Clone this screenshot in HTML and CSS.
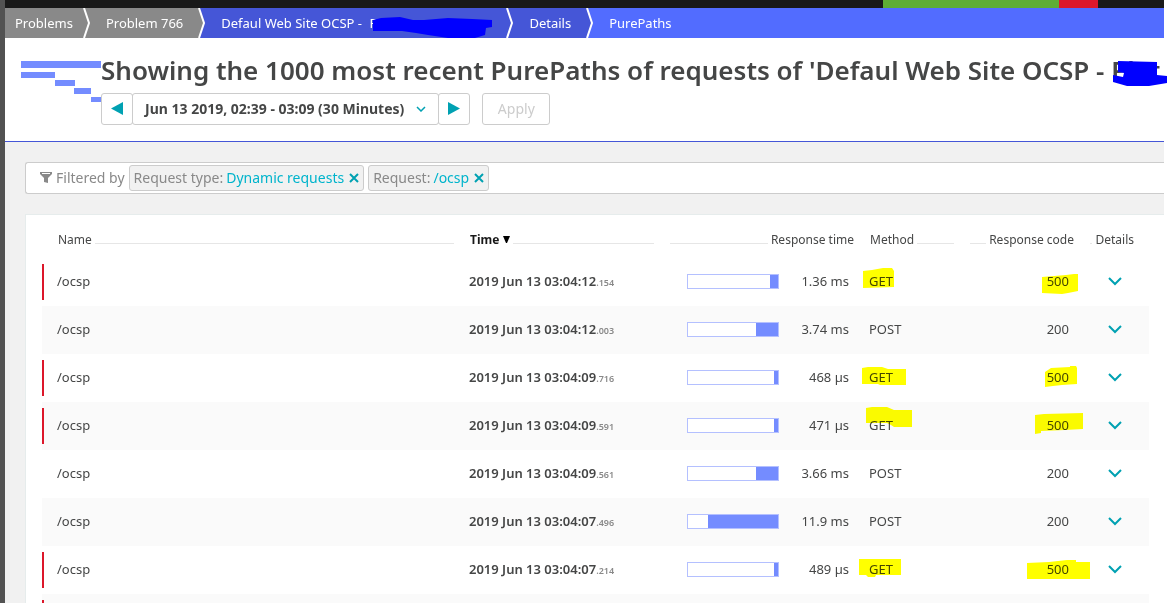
FILE: index.html
```html
<!DOCTYPE html>
<html lang="en">
<head>
<meta charset="UTF-8">
<meta name="viewport" content="width=device-width, initial-scale=1.0">
<title>PurePaths</title>
<link rel="stylesheet" href="styles.css">
</head>
<body>
<div class="page">
  <div class="topbar">
    <div class="status-ok"></div>
    <div class="status-problem"></div>
  </div>

  <nav class="crumbs">
    <a href="#" class="crumb grey">Problems</a>
    <svg class="sep grey" viewBox="0 0 8 30"><path d="M1 0L6 15L1 30"/></svg>
    <a href="#" class="crumb grey">Problem 766</a>
    <svg class="sep grey-blue" viewBox="0 0 8 30"><path class="tip" d="M0 0H1L6 15L1 30H0Z"/><path d="M1 0L6 15L1 30"/></svg>
    <a href="#" class="crumb blue">Defaul Web Site OCSP - <span class="redacted">P
      <svg class="scribble" viewBox="0 0 120 22"><path d="M1 4L9 2L28 1L41 4L52 4L76 2L100 3L120 4V11L114 12L113 19L103 22H76L56 19L44 17L30 15L1 15Z"/></svg></span></a>
    <svg class="sep blue" viewBox="0 0 8 30"><path d="M1 0L6 15L1 30"/></svg>
    <a href="#" class="crumb blue">Details</a>
    <svg class="sep blue-light" viewBox="0 0 8 30"><path class="tip" d="M0 0H1L6 15L1 30H0Z"/><path d="M1 0L6 15L1 30"/></svg>
    <a href="#" class="crumb">PurePaths</a>
  </nav>

  <header class="header">
    <svg class="waterfall" viewBox="0 0 80 44">
      <rect x="0" y="1" width="80" height="7"/>
      <rect x="0" y="12" width="34" height="6"/>
      <rect x="34" y="20" width="20" height="6"/>
      <rect x="53" y="28" width="17" height="6"/>
      <rect x="70" y="37" width="10" height="5"/>
    </svg>
    <div class="header-main">
      <h1>Showing the 1000 most recent PurePaths of requests of 'Defaul Web Site OCSP - <span class="redacted-title">Plat
        <svg class="scribble" viewBox="0 0 54 26"><path d="M5 1L44 2V15L54 16V23L36 26H14L0 22V15L10 17L11 13L5 12Z"/></svg></span></h1>
      <div class="controls">
        <div class="timeframe">
          <button class="step" aria-label="Previous timeframe"><svg width="12" height="14" viewBox="0 0 12 14"><path d="M12 0V13L0 6.5Z"/></svg></button>
          <button class="range">Jun 13 2019, 02:39 - 03:09 (30 Minutes)<svg width="10" height="6" viewBox="0 0 10 6"><path d="M1 1L5 5L9 1"/></svg></button>
          <button class="step" aria-label="Next timeframe"><svg width="12" height="14" viewBox="0 0 12 14"><path d="M0 0V13L12 6.5Z"/></svg></button>
        </div>
        <button class="apply" disabled>Apply</button>
      </div>
    </div>
  </header>

  <main class="content">
    <div class="filter">
      <svg class="funnel" width="12" height="12" viewBox="0 0 12 12"><path fill-rule="evenodd" d="M0 0H12V2L8 6V11L4 10V6L0 2ZM2 1V2H10V1Z"/></svg>
      <span class="filter-label">Filtered by</span>
      <span class="chip">Request type: <a href="#">Dynamic requests</a><button aria-label="Remove request type"><svg width="10" height="10" viewBox="0 0 10 10"><path d="M1 1L9 9M9 1L1 9"/></svg></button></span>
      <span class="chip">Request: <a href="#">/ocsp</a><button aria-label="Remove request"><svg width="10" height="10" viewBox="0 0 10 10"><path d="M1 1L9 9M9 1L1 9"/></svg></button></span>
    </div>

    <section class="panel">
      <table>
        <colgroup>
          <col><col class="col-time"><col class="col-response"><col class="col-method"><col class="col-code"><col class="col-details">
        </colgroup>
        <thead>
          <tr>
            <th class="name"><div class="head">Name</div></th>
            <th><div class="head"><button class="sort">Time <svg width="7" height="8" viewBox="0 0 7 8"><path d="M0 0H7L4 7H3Z"/></svg></button></div></th>
            <th><div class="head right">Response time</div></th>
            <th><div class="head">Method</div></th>
            <th><div class="head right">Response code</div></th>
            <th><div class="head right details-head">Details</div></th>
          </tr>
        </thead>
        <tbody>
          <tr class="failed">
            <td class="name">/ocsp</td>
            <td class="time">2019 Jun 13 03:04:12<small>.154</small></td>
            <td><div class="response"><div class="bar"><div class="fill" style="width: 9%"></div></div>1.36 ms</div></td>
            <td>GET<svg class="marker" viewBox="0 0 100 48"><path d="M1 13L10 12L21 10H30L32 13V29L1 30Z"/></svg></td>
            <td class="code">500<svg class="marker" viewBox="0 0 120 48"><path d="M80 19L104 17L112 16H116V33L106 35L100 36L80 35Z"/></svg></td>
            <td class="details"><button aria-label="Show details"><svg width="14" height="9" viewBox="0 0 14 9"><path d="M1 1L7 7L13 1"/></svg></button></td>
          </tr>
          <tr>
            <td class="name">/ocsp</td>
            <td class="time">2019 Jun 13 03:04:12<small>.003</small></td>
            <td><div class="response"><div class="bar"><div class="fill" style="width: 25%"></div></div>3.74 ms</div></td>
            <td>POST</td>
            <td class="code">200</td>
            <td class="details"><button aria-label="Show details"><svg width="14" height="9" viewBox="0 0 14 9"><path d="M1 1L7 7L13 1"/></svg></button></td>
          </tr>
          <tr class="failed">
            <td class="name">/ocsp</td>
            <td class="time">2019 Jun 13 03:04:09<small>.716</small></td>
            <td><div class="response"><div class="bar"><div class="fill" style="width: 4%"></div></div>468 µs</div></td>
            <td>GET<svg class="marker" viewBox="0 0 100 48"><path d="M0 14L6 13H20L26 15H44V31H18L16 30H0Z"/></svg></td>
            <td class="code">500<svg class="marker" viewBox="0 0 120 48"><path d="M83 18L89 14L108 13V12H114L115 14V30L100 31L91 32L83 33Z"/></svg></td>
            <td class="details"><button aria-label="Show details"><svg width="14" height="9" viewBox="0 0 14 9"><path d="M1 1L7 7L13 1"/></svg></button></td>
          </tr>
          <tr class="failed">
            <td class="name">/ocsp</td>
            <td class="time">2019 Jun 13 03:04:09<small>.591</small></td>
            <td><div class="response"><div class="bar"><div class="fill" style="width: 4%"></div></div>471 µs</div></td>
            <td>GET<svg class="marker" viewBox="0 0 100 48"><path d="M4 6L10 5H25L32 8H50V25H32L29 23L25 21H4Z"/></svg></td>
            <td class="code">500<svg class="marker" viewBox="0 0 120 48"><path d="M73 13L82 12L121 11V27L103 28L79 29V31L73 32Z"/></svg></td>
            <td class="details"><button aria-label="Show details"><svg width="14" height="9" viewBox="0 0 14 9"><path d="M1 1L7 7L13 1"/></svg></button></td>
          </tr>
          <tr>
            <td class="name">/ocsp</td>
            <td class="time">2019 Jun 13 03:04:09<small>.561</small></td>
            <td><div class="response"><div class="bar"><div class="fill" style="width: 25%"></div></div>3.66 ms</div></td>
            <td>POST</td>
            <td class="code">200</td>
            <td class="details"><button aria-label="Show details"><svg width="14" height="9" viewBox="0 0 14 9"><path d="M1 1L7 7L13 1"/></svg></button></td>
          </tr>
          <tr>
            <td class="name">/ocsp</td>
            <td class="time">2019 Jun 13 03:04:07<small>.496</small></td>
            <td><div class="response"><div class="bar"><div class="fill" style="width: 78%"></div></div>11.9 ms</div></td>
            <td>POST</td>
            <td class="code">200</td>
            <td class="details"><button aria-label="Show details"><svg width="14" height="9" viewBox="0 0 14 9"><path d="M1 1L7 7L13 1"/></svg></button></td>
          </tr>
          <tr class="failed">
            <td class="name">/ocsp</td>
            <td class="time">2019 Jun 13 03:04:07<small>.214</small></td>
            <td><div class="response"><div class="bar"><div class="fill" style="width: 4%"></div></div>489 µs</div></td>
            <td>GET<svg class="marker" viewBox="0 0 100 48"><path d="M-3 13H39V29H14L13 31H6L4 29H-3Z"/></svg></td>
            <td class="code">500<svg class="marker" viewBox="0 0 120 48"><path d="M65 17L87 16L105 14H114V16H128V33H65Z"/></svg></td>
            <td class="details"><button aria-label="Show details"><svg width="14" height="9" viewBox="0 0 14 9"><path d="M1 1L7 7L13 1"/></svg></button></td>
          </tr>
          <tr class="failed">
            <td class="name"></td><td></td><td></td><td></td><td></td><td></td>
          </tr>
        </tbody>
      </table>
    </section>
  </main>
</div>
</body>
</html>
```
FILE: styles.css
```css
* {
  box-sizing: border-box;
}

body {
  margin: 0;
  height: 100vh;
  overflow: hidden;
  background: #fff;
  color: #454646;
  font-family: "Noto Sans", "Open Sans", sans-serif;
  font-size: 13px;
  line-height: 20px;
}

button {
  margin: 0;
  padding: 0;
  border: 0;
  background: none;
  color: inherit;
  font: inherit;
  cursor: pointer;
}

a {
  color: #00b4cc;
  text-decoration: none;
}

.page {
  margin-right: 4px;
  border-left: 5px solid #525252;
  background: #f1f1f1;
}

/* top status strip */
.topbar {
  display: flex;
  justify-content: flex-end;
  height: 8px;
  padding-right: 66px;
  background: #191919;
}

.status-ok {
  width: 176px;
  background: #5ead35;
}

.status-problem {
  width: 39px;
  background: #dc172a;
}

/* breadcrumbs */
.crumbs {
  display: flex;
  height: 30px;
  background: #526cff;
  line-height: 30px;
}

.crumb {
  padding: 0 15px;
  color: #fff;
  white-space: nowrap;
}

.crumb:first-child {
  padding: 0 10px;
}

.grey {
  background: #898989;
}

.blue,
.grey-blue {
  background: #4556d7;
}

.sep {
  width: 8px;
  height: 30px;
  fill: none;
  stroke: #fff;
  stroke-width: 2;
}

.sep .tip {
  fill: #898989;
  stroke: none;
}

.sep.blue-light .tip {
  fill: #4556d7;
}

.redacted {
  display: inline-block;
  position: relative;
  width: 122px;
  margin-left: 4px;
}

.redacted-title {
  position: relative;
}

.scribble {
  position: absolute;
  fill: #00f;
}

.redacted .scribble {
  left: 3px;
  top: 8px;
  width: 120px;
  height: 22px;
}

.redacted-title .scribble {
  left: 2px;
  top: 8px;
  width: 54px;
  height: 26px;
}

/* page header */
.header {
  display: flex;
  padding: 15px 0 16px 16px;
  border-bottom: 1px solid #4556d7;
  background: #fff;
}

.waterfall {
  flex: none;
  width: 80px;
  height: 44px;
  margin-top: 7px;
  fill: #748cff;
}

.header-main {
  min-width: 0;
}

h1 {
  margin: 0 0 6px;
  font-size: 26px;
  font-weight: 600;
  line-height: 34px;
  white-space: nowrap;
}

.controls {
  display: flex;
  gap: 12px;
}

.timeframe {
  display: flex;
}

.controls button {
  display: flex;
  align-items: center;
  justify-content: center;
  height: 32px;
  border: 1px solid #ccc;
  border-radius: 3px;
  font-size: 14px;
}

.controls .step {
  width: 32px;
  fill: #00a1b2;
}

.controls .range {
  gap: 12px;
  margin: 0 -1px;
  padding: 0 12px;
  font-weight: 700;
}

.range svg {
  fill: none;
  stroke: #00a1b2;
  stroke-width: 1.5;
}

.controls .apply {
  width: 68px;
  color: #ccc;
}

/* filter bar */
.content {
  padding: 20px 0 0 20px;
}

.filter {
  display: flex;
  align-items: center;
  gap: 4px;
  height: 32px;
  padding-left: 14px;
  border: 1px solid #ccc;
  border-right: 0;
  border-radius: 3px 0 0 3px;
  background: #fff;
  color: #898989;
  font-size: 14px;
}

.funnel {
  fill: #898989;
}

.chip {
  display: flex;
  align-items: center;
  gap: 3px;
  height: 26px;
  padding: 0 4px;
  border: 1px solid #ccc;
  border-radius: 3px;
  background: #f1f1f1;
}

.chip button {
  display: flex;
  margin-left: 2px;
}

.chip svg {
  fill: none;
  stroke: #00a1b2;
  stroke-width: 2;
}

/* purepath table */
.panel {
  margin-top: 20px;
  padding: 0 15px 0 16px;
  border: 1px solid #e6ecec;
  border-right: 0;
  background: #fff;
}

table {
  width: 100%;
  border-collapse: collapse;
  table-layout: fixed;
}

.col-time,
.col-response {
  width: 200px;
}

.col-method {
  width: 100px;
}

.col-code {
  width: 120px;
}

.col-details {
  width: 67px;
}

th {
  height: 43px;
  padding: 6px 8px 0;
  font-size: 12px;
  font-weight: 400;
  text-align: left;
}

th.name {
  padding-left: 16px;
}

.head {
  display: flex;
  align-items: center;
  gap: 3px;
  white-space: nowrap;
}

/* thin rule filling the rest of the header cell */
.head::after {
  content: "";
  flex: 1;
  height: 1px;
  margin-top: 8px;
  background: #e6e6e6;
}

.head.right {
  flex-direction: row-reverse;
}

.details-head {
  padding-right: 7px;
}

.sort {
  color: #191919;
  font-weight: 700;
}

td {
  position: relative;
  height: 48px;
  padding: 0 8px 2px 7px;
}

td.name {
  padding-left: 15px;
}

tbody tr:nth-child(even) {
  background: #fafafa;
}

.failed .name::before {
  content: "";
  position: absolute;
  left: 0;
  top: 6px;
  width: 2px;
  height: 36px;
  background: #dc172a;
}

.time {
  font-weight: 600;
}

.time small {
  color: #898989;
  font-size: 9px;
  line-height: 1;
}

.response {
  display: flex;
  align-items: center;
  justify-content: space-between;
  padding: 0 5px 0 18px;
}

.bar {
  display: flex;
  justify-content: flex-end;
  width: 92px;
  height: 15px;
  border: 1px solid #b4c0ff;
  background: #fff;
}

.fill {
  background: #748cff;
}

.code {
  padding-right: 13px;
  text-align: right;
}

.marker {
  position: absolute;
  left: 0;
  top: 0;
  width: 100%;
  height: 100%;
  overflow: visible;
  fill: #ff0;
  mix-blend-mode: multiply;
  pointer-events: none;
}

.details {
  padding-left: 26px;
}

.details button {
  display: flex;
}

.details svg {
  fill: none;
  stroke: #00a1b2;
  stroke-width: 2;
}
```
